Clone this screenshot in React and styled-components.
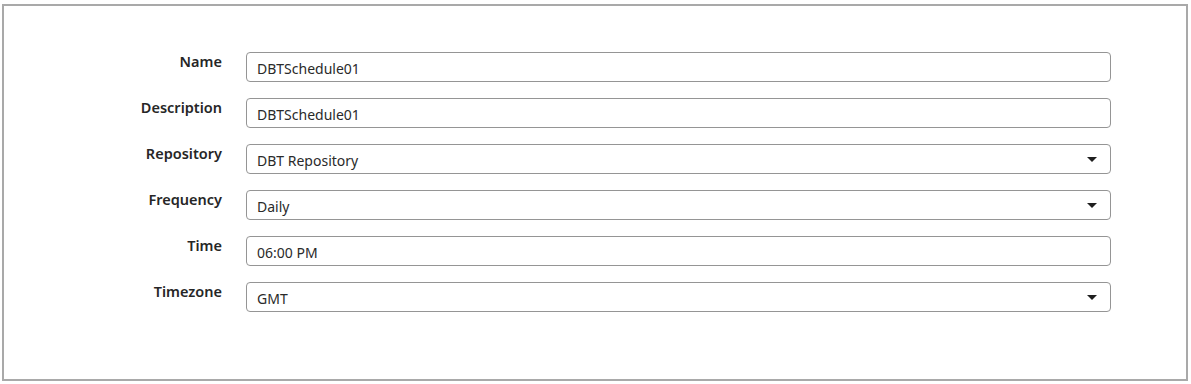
import React from 'react'
import styled, { createGlobalStyle } from 'styled-components'

const GlobalStyle = createGlobalStyle`
  body {
    margin: 0;
    background: #fff;
    font-family: "Noto Sans", "Open Sans", sans-serif;
  }
`

const Panel = styled.div`
  box-sizing: border-box;
  width: 1186px;
  height: 377px;
  margin: 4px 0 0 2px;
  border: 2px solid #a9a9a9;
  padding-top: 46px;
`

const Form = styled.div`
  display: grid;
  grid-template-columns: 218px 865px;
  column-gap: 24px;
  row-gap: 16px;
`

const Label = styled.label`
  justify-self: end;
  font-size: 14.5px;
  line-height: 18px;
  font-weight: 600;
  color: #262626;
`

const Field = styled.div`
  position: relative;
  box-sizing: border-box;
  height: 30px;
  border: 1px solid #959595;
  border-radius: 4px;
  display: flex;
  align-items: center;
  padding: 2px 10px 0;
  font-size: 14px;
  color: #2a2a2a;
`

const Caret = styled.span`
  position: absolute;
  right: 13px;
  top: 12px;
  width: 0;
  height: 0;
  border-left: 5px solid transparent;
  border-right: 5px solid transparent;
  border-top: 5px solid #1f1f1f;
`

const rows = [
  { label: 'Name', value: 'DBTSchedule01' },
  { label: 'Description', value: 'DBTSchedule01' },
  { label: 'Repository', value: 'DBT Repository', select: true },
  { label: 'Frequency', value: 'Daily', select: true },
  { label: 'Time', value: '06:00 PM' },
  { label: 'Timezone', value: 'GMT', select: true },
]

export default function App() {
  return (
    <>
      <GlobalStyle />
      <Panel>
        <Form>
          {rows.map((r) => (
            <React.Fragment key={r.label}>
              <Label>{r.label}</Label>
              <Field>
                {r.value}
                {r.select && <Caret />}
              </Field>
            </React.Fragment>
          ))}
        </Form>
      </Panel>
    </>
  )
}
